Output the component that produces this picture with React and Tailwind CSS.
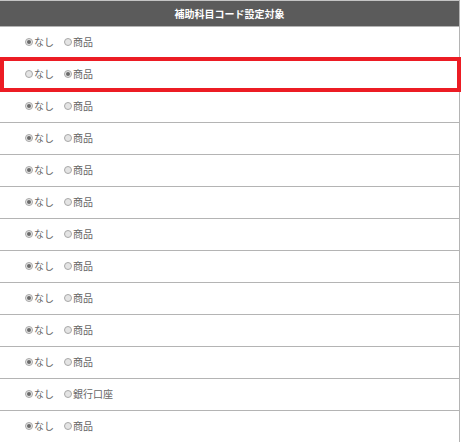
import React from "react";

const rows = [
  { sel: 0, label: "商品" },
  { sel: 1, label: "商品" },
  { sel: 0, label: "商品" },
  { sel: 0, label: "商品" },
  { sel: 0, label: "商品" },
  { sel: 0, label: "商品" },
  { sel: 0, label: "商品" },
  { sel: 0, label: "商品" },
  { sel: 0, label: "商品" },
  { sel: 0, label: "商品" },
  { sel: 0, label: "商品" },
  { sel: 0, label: "銀行口座" },
  { sel: 0, label: "商品" },
];

function Radio({ checked }) {
  return (
    <span className="inline-flex items-center justify-center w-[8px] h-[8px] rounded-full border border-[#a8a8a8] bg-[#e4e4e4] mr-[1px]">
      {checked && <span className="block w-[4px] h-[4px] rounded-full bg-[#6a6a6a]" />}
    </span>
  );
}

export default function App() {
  return (
    <div
      className="relative w-[461px] h-[442px] bg-white overflow-hidden"
      style={{ fontFamily: '"Noto Sans CJK JP", "Noto Sans", sans-serif' }}
    >
      <div className="w-[460px] border-r border-[#b4b4b4]">
        <div className="h-[26px] border-t border-[#c4c4c4] bg-[#5b5b5b] flex items-center justify-center text-white text-[10px] font-bold leading-none">
          補助科目コード設定対象
        </div>
        {rows.map((r, i) => (
          <div
            key={i}
            className="h-[32px] border-t border-[#b4b4b4] flex items-center pl-[25px] pb-[2px] text-[10px] text-[#666] leading-none"
          >
            <label className="flex items-center">
              <Radio checked={r.sel === 0} />
              <span>なし</span>
            </label>
            <label className="flex items-center ml-[10px]">
              <Radio checked={r.sel === 1} />
              <span>{r.label}</span>
            </label>
          </div>
        ))}
      </div>
      <div className="absolute left-0 top-[57px] w-[461px] h-[35px] border-[4px] border-[#ec1c24]" />
    </div>
  );
}
